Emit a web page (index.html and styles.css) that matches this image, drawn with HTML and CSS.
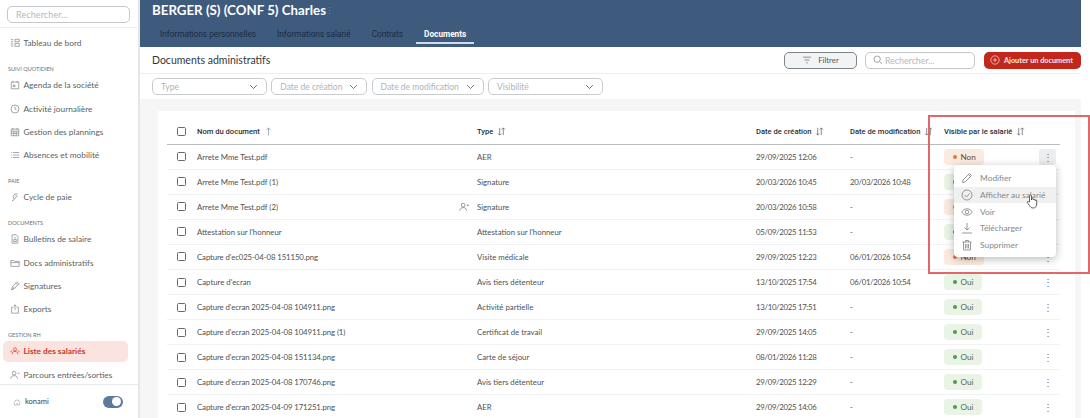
FILE: index.html
```html
<!DOCTYPE html>
<html lang="fr">
<head>
<meta charset="utf-8">
<title>Documents administratifs</title>
<link rel="stylesheet" href="styles.css">
</head>
<body>
<svg class="defs" width="0" height="0">
  <symbol id="sort" viewBox="0 0 10 10"><path d="M3 1v8M1.2 7.2 3 9l1.8-1.8M7 9V1M5.200 2.800 7 1l1.800 1.800" fill="none" stroke="currentColor" stroke-width=".8"/></symbol>
  <symbol id="chev" viewBox="0 0 12 8"><path d="M1.500 1.500 6 6l4.500-4.500" fill="none" stroke="currentColor" stroke-width="1.100"/></symbol>
</svg>
<div class="app">
  <aside class="side">
    <div class="side-search"><div class="side-input">Rechercher...</div></div>
    <nav class="nav">
      <a class="item"><svg viewBox="0 0 12 12"><path d="M1 2h3M1 4.500h3M1 7h3M1 9.500h3M6 1.500h5v3H6zM6 6.500h5v3.500H6z"/></svg>Tableau de bord</a>
      <div class="label">SUIVI QUOTIDIEN</div>
      <a class="item"><svg viewBox="0 0 12 12"><path d="M1.500 2.500h9v8h-9zM3.500 1v2M8.500 1v2M4 6h2v2H4z"/></svg>Agenda de la société</a>
      <a class="item"><svg viewBox="0 0 12 12"><circle cx="6" cy="6" r="4.800"/><path d="M6 3v3.200l2 1"/></svg>Activité journalière</a>
      <a class="item"><svg viewBox="0 0 12 12"><path d="M1.500 2.500h9v8h-9zM3.500 1v2M8.500 1v2M1.500 5h9M1.500 7.500h9M4.500 5v5.500M7.500 5v5.500"/></svg>Gestion des plannings</a>
      <a class="item"><svg viewBox="0 0 12 12"><path d="M1 3h1M3.500 3H11M1 6h1M3.500 6H11M1 9h1M3.500 9H11"/></svg>Absences et mobilité</a>
      <div class="label">PAIE</div>
      <a class="item"><svg viewBox="0 0 12 12"><path d="M9 2.500A3.500 3.500 0 0 0 4 5.500v2.500M8.500 4.500 4 10l-1 .8.200-1.300M6 3l2 2"/></svg>Cycle de paie</a>
      <div class="label">DOCUMENTS</div>
      <a class="item"><svg viewBox="0 0 12 12"><path d="M2.500 1h5l2 2.200V11h-7zM5 4.500h2M4.500 6.500h3v2.500h-3z"/></svg>Bulletins de salaire</a>
      <a class="item"><svg viewBox="0 0 12 12"><path d="M1 3h3.500l1 1H11v6H1zM1 5.500h10"/></svg>Docs administratifs</a>
      <a class="item"><svg viewBox="0 0 12 12"><path d="M1.500 10.500 3 7l4-4.500 2.500 2L5.500 9zM7 2l1-1 3 2.500-1 1.200M5 7l-2 3.500"/></svg>Signatures</a>
      <a class="item"><svg viewBox="0 0 12 12"><path d="M4 4H2v7h8V4H8M6 7.500V1M4.300 2.700 6 1l1.700 1.700"/></svg>Exports</a>
      <div class="label">GESTION RH</div>
      <a class="item active"><svg viewBox="0 0 12 12"><circle cx="6" cy="4" r="1.800"/><path d="M2.500 10c0-2.500 1.500-3.500 3.500-3.500s3.500 1 3.500 3.500M1 7.500c0-1.300.6-2 1.800-2.300M11 7.500c0-1.300-.6-2-1.800-2.300"/></svg>Liste des salariés</a>
      <a class="item"><svg viewBox="0 0 12 12"><circle cx="5" cy="3.800" r="2.200"/><path d="M1 10.500c0-2.500 1.500-3.700 4-3.700s4 1.200 4 3.700M9.500 4h2"/></svg>Parcours entrées/sorties</a>
    </nav>
    <div class="side-foot">
      <svg viewBox="0 0 12 12"><path d="M2 7a4 4 0 0 1 8 0v3.500H2zM4.500 8.500h3"/></svg>
      <span class="company">konami</span>
      <span class="toggle"><span class="knob"></span></span>
    </div>
  </aside>

  <main class="main">
    <header class="head">
      <div class="head-title"><h1>BERGER (S) (CONF 5) Charles</h1><span class="head-dots">⋮</span></div>
      <div class="tabs">
        <a class="tab">Informations personnelles</a>
        <a class="tab">Informations salarié</a>
        <a class="tab">Contrats</a>
        <a class="tab current">Documents</a>
      </div>
    </header>

    <div class="toolbar">
      <h2>Documents administratifs</h2>
      <div class="actions">
        <button class="btn-filter"><svg viewBox="0 0 12 10"><path d="M1 1.500h10M3 5h6M5 8.500h2"/></svg>Filtrer</button>
        <div class="search"><svg viewBox="0 0 12 12"><circle cx="5" cy="5" r="3.800"/><path d="m8 8 3 3"/></svg>Rechercher...</div>
        <button class="btn-add"><svg viewBox="0 0 12 12"><circle cx="6" cy="6" r="5"/><path d="M6 3.500v5M3.500 6h5"/></svg>Ajouter un document</button>
      </div>
    </div>

    <div class="filters">
      <div class="select s1">Type<svg><use href="#chev"/></svg></div>
      <div class="select s2">Date de création<svg><use href="#chev"/></svg></div>
      <div class="select s3">Date de modification<svg><use href="#chev"/></svg></div>
      <div class="select s4">Visibilité<svg><use href="#chev"/></svg></div>
    </div>

    <section class="content">
      <div class="card">
        <div class="row thead">
          <span class="check"></span>
          <span>Nom du document <svg class="up" viewBox="0 0 10 10"><path d="M5 9.500V1M2.500 3.500 5 1l2.500 2.500" fill="none" stroke="currentColor" stroke-width=".8"/></svg></span>
          <span>Type <svg class="sort"><use href="#sort"/></svg></span>
          <span>Date de création <svg class="sort"><use href="#sort"/></svg></span>
          <span class="nowrap">Date de modification <svg class="sort"><use href="#sort"/></svg></span>
          <span class="nowrap">Visible par le salarié <svg class="sort"><use href="#sort"/></svg></span>
          <span></span>
        </div>
        <div class="row"><span class="check"></span><span>Arrete Mme Test.pdf</span><span>AER</span><span class="date">29/09/2025 12:06</span><span class="date">-</span><span><b class="pill no">Non</b></span><span class="kebab on">⋮</span></div>
        <div class="row"><span class="check"></span><span>Arrete Mme Test.pdf (1)</span><span>Signature</span><span class="date">20/03/2026 10:45</span><span class="date">20/03/2026 10:48</span><span><b class="pill yes">Oui</b></span><span class="kebab">⋮</span></div>
        <div class="row"><span class="check"></span><span class="name-flag">Arrete Mme Test.pdf (2)<svg viewBox="0 0 12 12"><circle cx="5" cy="3.800" r="2.200"/><path d="M1 10.500c0-2.500 1.500-3.700 4-3.700s4 1.200 4 3.700M9.500 4h2M10.500 3v2"/></svg></span><span>Signature</span><span class="date">20/03/2026 10:58</span><span class="date">-</span><span><b class="pill no">Non</b></span><span class="kebab">⋮</span></div>
        <div class="row"><span class="check"></span><span>Attestation sur l'honneur</span><span>Attestation sur l'honneur</span><span class="date">05/09/2025 11:53</span><span class="date">-</span><span><b class="pill yes">Oui</b></span><span class="kebab">⋮</span></div>
        <div class="row"><span class="check"></span><span class="file">Capture d'ec025-04-08 151150.png</span><span>Visite médicale</span><span class="date">29/09/2025 12:23</span><span class="date">06/01/2026 10:54</span><span><b class="pill no">Non</b></span><span class="kebab">⋮</span></div>
        <div class="row"><span class="check"></span><span>Capture d'ecran</span><span>Avis tiers détenteur</span><span class="date">13/10/2025 17:54</span><span class="date">06/01/2026 10:54</span><span><b class="pill yes">Oui</b></span><span class="kebab">⋮</span></div>
        <div class="row"><span class="check"></span><span class="file">Capture d'ecran 2025-04-08 104911.png</span><span>Activité partielle</span><span class="date">13/10/2025 17:51</span><span class="date">-</span><span><b class="pill yes">Oui</b></span><span class="kebab">⋮</span></div>
        <div class="row"><span class="check"></span><span class="file">Capture d'ecran 2025-04-08 104911.png (1)</span><span>Certificat de travail</span><span class="date">29/09/2025 14:05</span><span class="date">-</span><span><b class="pill yes">Oui</b></span><span class="kebab">⋮</span></div>
        <div class="row"><span class="check"></span><span class="file">Capture d'ecran 2025-04-08 151134.png</span><span>Carte de séjour</span><span class="date">08/01/2026 11:28</span><span class="date">-</span><span><b class="pill yes">Oui</b></span><span class="kebab">⋮</span></div>
        <div class="row"><span class="check"></span><span class="file">Capture d'ecran 2025-04-08 170746.png</span><span>Avis tiers détenteur</span><span class="date">29/09/2025 12:29</span><span class="date">-</span><span><b class="pill yes">Oui</b></span><span class="kebab">⋮</span></div>
        <div class="row"><span class="check"></span><span class="file">Capture d'ecran 2025-04-09 171251.png</span><span>AER</span><span class="date">29/09/2025 14:06</span><span class="date">-</span><span><b class="pill yes">Oui</b></span><span class="kebab">⋮</span></div>
      </div>
    </section>
  </main>
</div>

<div class="menu">
  <div class="menu-item"><svg viewBox="0 0 12 12"><path d="M1.500 10.500 2 8l6.500-6.500 2 2L4 10zM7.500 2.500l2 2"/></svg>Modifier</div>
  <div class="menu-item hover"><svg viewBox="0 0 12 12"><circle cx="6" cy="6" r="5"/><path d="m3.500 6 2 2 3-3.500"/></svg>Afficher au salarié</div>
  <div class="menu-item"><svg viewBox="0 0 12 12"><path d="M.8 6C2 3.800 3.800 2.800 6 2.800S10 3.800 11.200 6C10 8.200 8.200 9.200 6 9.200S2 8.200.8 6z"/><circle cx="6" cy="6" r="1.800"/></svg>Voir</div>
  <div class="menu-item"><svg viewBox="0 0 12 12"><path d="M6 1v7M3.500 5.500 6 8l2.500-2.500M1 11h10"/></svg>Télécharger</div>
  <div class="menu-item"><svg viewBox="0 0 12 12"><path d="M1.500 3h9M4.500 3V1.500h3V3M2.500 3v8h7V3M4.500 5v4.500M6 5v4.500M7.500 5v4.500"/></svg>Supprimer</div>
</div>
<svg class="cursor" viewBox="0 0 12 15"><path d="M3.500 8V2a1 1 0 0 1 2 0v4l.2-1a.9.9 0 0 1 1.700.3V6a.9.9 0 0 1 1.700 0v.6a.8.8 0 0 1 1.600.2V10c0 2.500-1.300 4-3.500 4-2 0-2.800-.8-3.700-2.500L1.300 8.700c-.5-1 .8-1.700 1.400-.9z" fill="#fff" stroke="#3a3a3a" stroke-width=".8"/></svg>
<div class="annotation"></div>
</body>
</html>
```

FILE: styles.css
```css
* { box-sizing: border-box; }
html, body { margin: 0; height: 418px; overflow: hidden; background: #fff; }
body { font-family: Lato, "Liberation Sans", sans-serif; font-size: 8px; color: #4a4d50; }
.defs { position: absolute; }
svg { fill: none; stroke: currentColor; stroke-width: .8; flex: none; }

.app { display: flex; width: 1081px; height: 418px; }

.side { width: 140px; flex: none; height: 418px; border-right: 2px solid #e4e6e8; display: flex; flex-direction: column; }
.side-search { height: 28px; padding: 6px 8px 0 7px; border-bottom: 1px solid #eceef0; flex: none; }
.side-input { height: 17px; border: 1px solid #c4c8cb; border-radius: 5px; padding-left: 8px; line-height: 15px; font-size: 9px; color: #b4b8bb; letter-spacing: .1px; }
.nav { flex: 1; overflow: hidden; padding-top: 3.500px; }
.item { display: flex; align-items: center; gap: 4px; height: 23.300px; margin: 0 10px 0 3px; padding-left: 6.500px; font-size: 8.300px; color: #5a5f64; white-space: nowrap; }
.item svg { width: 10px; height: 10px; color: #777c80; }
.item.active { height: 21px; margin-top: 1px; margin-bottom: 1.300px; border-radius: 5px; background: #fbe3e0; color: #c8372c; font-weight: 700; }
.item.active svg { color: #c8372c; }
.label { height: 10px; margin-top: 8.800px; padding-left: 8px; font-size: 5.500px; line-height: 10px; color: #6c7075; }
.side-foot { height: 34px; flex: none; border-top: 1px solid #e8eaec; display: flex; align-items: center; padding: 0 15px 0 13px; }
.side-foot svg { width: 8px; height: 8px; color: #8b8f93; }
.company { margin-left: 4px; font-size: 7.500px; color: #3b3f33; flex: 1; }
.toggle { width: 20px; height: 12px; border-radius: 6px; background: #5d7a9c; padding: 1.500px 1px 1.500px 9px; }
.knob { display: block; width: 9px; height: 9px; border-radius: 50%; background: #fff; }

.main { flex: 1; min-width: 0; height: 418px; display: flex; flex-direction: column; }
.head { height: 47px; flex: none; background: #3e5b7e; padding: 0 12px; }
.head-title { display: flex; align-items: center; height: 20px; }
h1 { margin: 0; width: 164px; font-size: 13.300px; font-weight: 700; color: #fff; white-space: nowrap; }
.head-dots { margin-left: 9px; font-size: 9px; color: #6f87a3; }
.tabs { display: flex; gap: 5px; height: 24px; padding-top: 3px; }
.tab { display: flex; align-items: center; height: 21px; padding: 3px 8px 0; font: 8.250px Roboto, sans-serif; color: #1a2c42; border-bottom: 2px solid transparent; white-space: nowrap; }
.tab.current { color: #fff; font-weight: 700; border-bottom-color: #cfdae8; }

.toolbar { height: 27px; flex: none; display: flex; align-items: center; justify-content: space-between; padding-left: 12px; border-bottom: 1px solid #eceef0; }
h2 { margin: 0; font-size: 10.500px; font-weight: 400; color: #33373a; }
.actions { display: flex; align-items: center; gap: 8px; }
button { font-family: inherit; margin: 0; }
.btn-filter { width: 73px; height: 17px; display: flex; align-items: center; justify-content: center; gap: 6px; border: 1px solid #7f8589; border-radius: 5px; background: #f1f3f4; font-size: 7.800px; color: #54595d; padding: 0; }
.btn-filter svg { width: 10px; height: 8px; }
.search { width: 110px; height: 17px; display: flex; align-items: center; gap: 2px; padding-left: 7px; margin-right: 1px; border: 1px solid #c2c6c9; border-radius: 5px; font-size: 8.800px; color: #b5b9bc; }
.search svg { width: 10px; height: 10px; color: #777; }
.btn-add { width: 97px; height: 17px; display: flex; align-items: center; gap: 4px; padding: 0 0 0 6px; border: 0; border-radius: 5px; background: #c1281b; color: #fbe9e7; font-size: 7.300px; font-weight: 700; white-space: nowrap; }
.btn-add svg { width: 10px; height: 10px; }

.filters { height: 25px; flex: none; display: flex; gap: 4.300px; padding: 4px 0 0 12px; }
.select { height: 17px; display: flex; align-items: center; justify-content: space-between; padding: 0 8px 0 8px; border: 1px solid #c9cccf; border-radius: 5px; font-size: 8.500px; color: #b0b4b7; white-space: nowrap; }
.select svg { width: 9px; height: 6px; color: #54595d; stroke: none; }
.s1 { width: 115px; }
.s2 { width: 96px; }
.s3 { width: 112px; }
.s4 { width: 115px; }

.content { flex: 1; min-height: 0; background: #f6f6f7; padding: 12px 6px 0 18px; overflow: hidden; }
.card { height: 320px; background: #fff; padding: 7px 15px 0 9px; overflow: hidden; }
.row { display: grid; grid-template-columns: 30px 280px 279px 94px 94px 91px 25px; align-items: center; height: 25.100px; border-bottom: 1px solid #f1f2f3; color: #4d5154; font-size: 7.800px; white-space: nowrap; }
.thead { height: 26.500px; padding-top: 1.500px; border-bottom: 1px solid #b9bcbe; font: 500 7.600px Roboto, sans-serif; color: #2b2f33; }
.nowrap { white-space: nowrap; }
.date { letter-spacing: -.3px; }
.file { letter-spacing: -.1px; }
.check { display: block; width: 9px; height: 9px; margin-left: 10px; border: 1px solid #656a6e; border-radius: 1.500px; }
.sort { display: inline-block; width: 9px; height: 9px; vertical-align: -2px; margin-left: 2px; color: #5d6367; stroke: none; }
.up { display: inline-block; width: 9px; height: 9px; vertical-align: -2px; margin-left: 2px; color: #7b98b8; stroke: none; }
.name-flag { display: flex; align-items: center; justify-content: space-between; padding-right: 8px; }
.name-flag svg { width: 10px; height: 10px; color: #666; }
.pill { display: inline-flex; align-items: center; gap: 3.500px; height: 16px; padding: 0 7px 0 9px; border-radius: 4px; font-weight: 400; font-size: 8.200px; }
.pill::before { content: ""; width: 4px; height: 4px; border-radius: 50%; }
.no { background: #fbeadf; color: #5a4a40; min-width: 40px; }
.no::before { background: #d67a44; }
.yes { background: #e9f3e6; color: #5a665a; min-width: 38px; }
.yes::before { background: #4e9a4e; }
.kebab { justify-self: end; width: 17px; height: 16px; margin-right: 4px; border-radius: 3px; text-align: center; line-height: 16px; font-size: 10px; color: #6d7276; }
.kebab.on { background: #eceded; }

.menu { position: absolute; left: 954px; top: 165px; width: 102px; height: 92px; padding-top: 5px; background: #fff; border-radius: 4px; box-shadow: 0 2px 8px rgba(0,0,0,.28); }
.menu-item { display: flex; align-items: center; gap: 7px; height: 16.700px; padding-left: 7px; font-size: 8.400px; color: #85898c; white-space: nowrap; }
.menu-item svg { width: 12px; height: 12px; color: #7a7f83; }
.menu-item.hover { background: #f0f0f1; }
.cursor { position: absolute; left: 1026px; top: 194px; width: 12px; height: 15px; stroke: none; }
.annotation { position: absolute; left: 928px; top: 115px; width: 162px; height: 159px; border: 2px solid #e0686a; }
```
